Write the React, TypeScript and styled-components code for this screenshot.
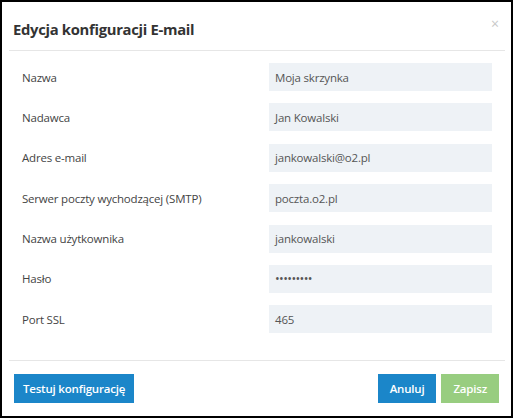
import React from "react";
import styled, { createGlobalStyle } from "styled-components";

const Global = createGlobalStyle`
  html, body { margin: 0; padding: 0; background: #fff; }
  body { font-family: "Open Sans", "Liberation Sans", sans-serif; }
  * { box-sizing: border-box; }
`;

const Frame = styled.div`
  width: 513px;
  height: 418px;
  border: 2px solid #000;
  background: #fff;
  display: flex;
  flex-direction: column;
`;

const Header = styled.div`
  margin: 0 6px 0 7px;
  height: 49px;
  border-bottom: 1.5px solid #e6e6e6;
  display: flex;
  align-items: center;
  justify-content: space-between;
  padding: 0 0 0 4px;
  position: relative;
`;

const Title = styled.h1`
  margin: 0;
  padding-top: 6px;
  font-size: 14.8px;
  font-weight: 700;
  color: #333;
  letter-spacing: -0.3px;
`;

const Close = styled.span`
  position: absolute;
  right: 6px;
  top: 15px;
  font-size: 14px;
  color: #c8c8c8;
  line-height: 1;
`;

const Body = styled.div`
  flex: 1;
  padding: 12px 19px 0 20px;
  display: flex;
  flex-direction: column;
  gap: 12.4px;
`;

const Row = styled.div`
  display: grid;
  grid-template-columns: 1fr 223px;
  align-items: center;
  height: 28px;
`;

const Label = styled.label`
  font-size: 11.5px;
  letter-spacing: -0.2px;
  color: #444;
`;

const Input = styled.div`
  height: 28px;
  background: #eef2f6;
  color: #555;
  font-size: 11.5px;
  letter-spacing: -0.2px;
  display: flex;
  align-items: center;
  padding: 0 6px;
`;

const Dots = styled.span`
  font-size: 12.5px;
  letter-spacing: -0.6px;
  color: #555;
`;

const Footer = styled.div`
  margin: 0 6px 0 7px;
  border-top: 1.5px solid #e6e6e6;
  height: 56px;
  display: flex;
  align-items: center;
  justify-content: space-between;
  padding: 0 6px 0 5px;
`;

const Right = styled.div`
  display: flex;
  gap: 5px;
`;

const Button = styled.button<{ $variant: "blue" | "green"; $pad?: number }>`
  height: 29px;
  border: none;
  padding: 0 ${(p) => p.$pad ?? 12}px;
  font-family: inherit;
  font-size: 11.5px;
  letter-spacing: -0.2px;
  font-weight: 600;
  color: #fff;
  background: ${(p) => (p.$variant === "blue" ? "#1b86c9" : "#98cd80")};
  cursor: pointer;
`;

const fields: [string, string][] = [
  ["Nazwa", "Moja skrzynka"],
  ["Nadawca", "Jan Kowalski"],
  ["Adres e-mail", "jankowalski@o2.pl"],
  ["Serwer poczty wychodzącej (SMTP)", "poczta.o2.pl"],
  ["Nazwa użytkownika", "jankowalski"],
  ["Hasło", "•••••••••"],
  ["Port SSL", "465"],
];

export default function App() {
  return (
    <>
      <Global />
      <Frame>
        <Header>
          <Title>Edycja konfiguracji E-mail</Title>
          <Close>×</Close>
        </Header>
        <Body>
          {fields.map(([l, v]) => (
            <Row key={l}>
              <Label>{l}</Label>
              <Input>{l === "Hasło" ? <Dots>{v}</Dots> : v}</Input>
            </Row>
          ))}
        </Body>
        <Footer>
          <Button $variant="blue" $pad={9}>Testuj konfigurację</Button>
          <Right>
            <Button $variant="blue">Anuluj</Button>
            <Button $variant="green">Zapisz</Button>
          </Right>
        </Footer>
      </Frame>
    </>
  );
}
